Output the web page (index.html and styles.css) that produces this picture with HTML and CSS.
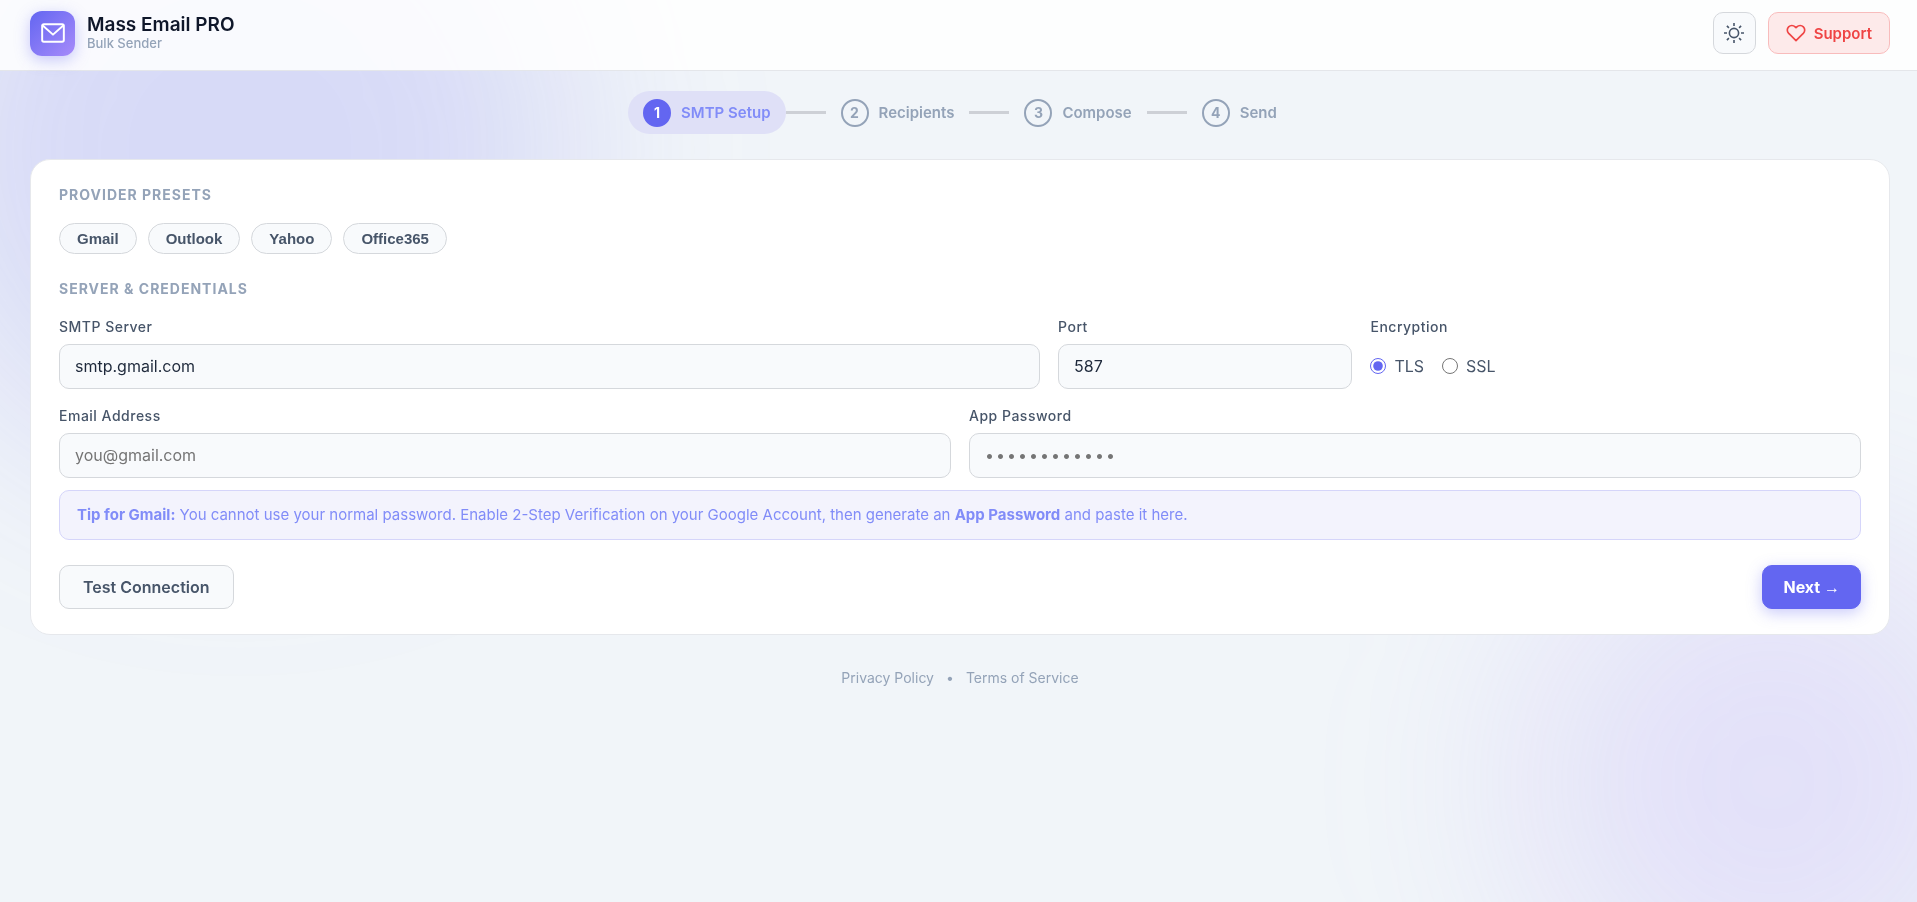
FILE: index.html
```html
<!DOCTYPE html>
<html lang="en">

<head>
    <meta charset="UTF-8">
    <meta name="viewport" content="width=device-width, initial-scale=1.0">
    <title>Mass Email PRO</title>
    <link rel="stylesheet" href="styles.css">
</head>

<body>
    <!-- Background glow -->
    <div class="blob blob-top"></div>
    <div class="blob blob-bottom"></div>

    <header class="topbar">
        <div class="brand">
            <div class="brand-logo">
                <svg width="26" height="26" viewBox="0 0 24 24" fill="none" stroke="currentColor" stroke-width="1.8"
                    stroke-linecap="round" stroke-linejoin="round">
                    <rect x="2" y="4" width="20" height="16" rx="1.5"></rect>
                    <path d="M2.5 5 L12 13.5 L21.5 5"></path>
                </svg>
            </div>
            <div class="brand-text">
                <h1>Mass Email PRO</h1>
                <p>Bulk Sender</p>
            </div>
        </div>
        <div class="topbar-actions">
            <button type="button" class="icon-btn" aria-label="Toggle theme">
                <svg width="20" height="20" viewBox="0 0 20 20" fill="none" stroke="currentColor" stroke-width="1.6">
                    <circle cx="10" cy="10" r="4.6"></circle>
                    <path d="M10 0v3M10 17v3M0 10h3M17 10h3M2.9 2.9l2 2M15.1 15.1l2 2M2.9 17.1l2-2M15.1 4.9l2-2"></path>
                </svg>
            </button>
            <a href="#" class="support-btn">
                <svg width="20" height="20" viewBox="0 0 24 24" fill="none" stroke="currentColor" stroke-width="2"
                    stroke-linecap="round" stroke-linejoin="round">
                    <path d="M20.84 4.61a5.5 5.5 0 0 0-7.78 0L12 5.67l-1.06-1.06a5.5 5.5 0 0 0-7.78 7.78l1.06 1.06L12 21.23l7.78-7.78 1.06-1.06a5.5 5.5 0 0 0 0-7.78z"></path>
                </svg>
                Support
            </a>
        </div>
    </header>

    <main class="page">
        <!-- Steps -->
        <div class="stepper">
            <div class="step active"><span class="step-num">1</span>SMTP Setup</div>
            <div class="step-line"></div>
            <div class="step"><span class="step-num">2</span>Recipients</div>
            <div class="step-line"></div>
            <div class="step"><span class="step-num">3</span>Compose</div>
            <div class="step-line"></div>
            <div class="step"><span class="step-num">4</span>Send</div>
        </div>

        <form class="card">
            <h2 class="section-title">Provider Presets</h2>
            <div class="presets">
                <button type="button" class="chip">Gmail</button>
                <button type="button" class="chip">Outlook</button>
                <button type="button" class="chip">Yahoo</button>
                <button type="button" class="chip">Office365</button>
            </div>

            <h2 class="section-title">Server &amp; Credentials</h2>
            <div class="grid grid-server">
                <div class="field">
                    <label for="server">SMTP Server</label>
                    <input type="text" id="server" value="smtp.gmail.com">
                </div>
                <div class="field">
                    <label for="port">Port</label>
                    <input type="text" id="port" value="587">
                </div>
                <div class="field" role="radiogroup" aria-labelledby="enc-label">
                    <span class="field-label" id="enc-label">Encryption</span>
                    <div class="radios">
                        <label><input type="radio" name="encryption" value="tls" checked>TLS</label>
                        <label><input type="radio" name="encryption" value="ssl">SSL</label>
                    </div>
                </div>
            </div>
            <div class="grid grid-login">
                <div class="field">
                    <label for="email">Email Address</label>
                    <input type="email" id="email" placeholder="you@gmail.com">
                </div>
                <div class="field">
                    <label for="password">App Password</label>
                    <input type="password" id="password" placeholder="••••••••••••">
                </div>
            </div>

            <div class="tip"><strong>Tip for Gmail:</strong> You cannot use your normal password. Enable 2-Step
                Verification on your Google Account, then generate an <strong>App Password</strong> and paste it here.
            </div>

            <div class="actions">
                <button type="button" class="btn btn-secondary">Test Connection</button>
                <button type="button" class="btn btn-primary">Next <span class="arrow">→</span></button>
            </div>
        </form>

        <footer class="footer">
            <a href="#">Privacy Policy</a>
            <span>•</span>
            <a href="#">Terms of Service</a>
        </footer>
    </main>
</body>

</html>
```

FILE: styles.css
```css
* {
    box-sizing: border-box;
}

body {
    margin: 0;
    min-height: 100vh;
    font-family: Inter, "Liberation Sans", sans-serif;
    font-size: 16px;
    color: #0f172a;
    background-color: #f1f5f9;
    overflow-x: hidden;
}

h1,
h2,
p {
    margin: 0;
}

button,
input {
    font-family: inherit;
}

a {
    text-decoration: none;
}

.blob {
    position: fixed;
    z-index: -1;
    border-radius: 50%;
    filter: blur(100px);
}

.blob-top {
    top: -180px;
    left: -90px;
    width: 660px;
    height: 660px;
    background-color: rgba(99, 102, 241, 0.18);
}

.blob-bottom {
    right: -105px;
    bottom: -130px;
    width: 500px;
    height: 500px;
    background-color: rgba(167, 139, 250, 0.18);
}

/* Header */
.topbar {
    display: flex;
    justify-content: space-between;
    align-items: center;
    height: 71px;
    padding: 0 27px 4px 30px;
    background-color: rgba(255, 255, 255, 0.85);
    border-bottom: 1px solid #e4e6ea;
}

.brand {
    display: flex;
    align-items: center;
    gap: 12px;
}

.brand-logo {
    display: flex;
    align-items: center;
    justify-content: center;
    width: 45px;
    height: 45px;
    border-radius: 12px;
    color: #fff;
    background: linear-gradient(135deg, #6366f1, #a78bfa);
    box-shadow: 0 4px 15px rgba(99, 102, 241, 0.35);
}

.brand-text h1 {
    font-size: 19px;
    font-weight: 600;
    line-height: 20px;
}

.brand-text p {
    font-size: 13px;
    font-weight: 500;
    line-height: 16px;
    color: #94a3b8;
}

.topbar-actions {
    display: flex;
    gap: 12px;
}

.icon-btn,
.support-btn {
    display: flex;
    align-items: center;
    justify-content: center;
    height: 42px;
    border-radius: 10px;
}

.icon-btn {
    width: 43px;
    padding: 0;
    color: #475569;
    background-color: #f8fafc;
    border: 1px solid #d5d8dc;
}

.support-btn {
    gap: 8px;
    padding: 0 17px;
    font-size: 15px;
    font-weight: 600;
    color: #ef4444;
    background-color: #fdeaea;
    border: 1px solid #f8bcbc;
}

.page {
    padding: 20px 27px 0 30px;
}

/* Stepper */
.stepper {
    display: flex;
    justify-content: center;
    align-items: center;
    margin-bottom: 25px;
}

.step {
    display: flex;
    align-items: center;
    gap: 10px;
    height: 43px;
    padding: 0 15px;
    border-radius: 22px;
    font-size: 15px;
    font-weight: 600;
    color: #94a3b8;
}

.step-num {
    display: flex;
    align-items: center;
    justify-content: center;
    width: 28px;
    height: 28px;
    border: 2px solid #94a3b8;
    border-radius: 50%;
    font-size: 14px;
    font-weight: 700;
}

.step.active {
    color: #818cf8;
    background-color: #dfe0f7;
}

.step.active .step-num {
    color: #fff;
    background-color: #6366f1;
    border-color: #6366f1;
}

.step-line {
    width: 40px;
    height: 3px;
    background-color: #cdd0d6;
}

/* Card */
.card {
    padding: 25px 28px;
    background-color: #fff;
    border: 1px solid #e6e8ec;
    border-radius: 20px;
}

.section-title {
    margin-bottom: 18px;
    font-size: 14px;
    font-weight: 700;
    line-height: 20px;
    letter-spacing: 1px;
    text-transform: uppercase;
    color: #94a3b8;
}

.presets {
    display: flex;
    gap: 11px;
    margin-bottom: 25px;
}

.chip {
    height: 31px;
    padding: 0 17px;
    font-family: "Liberation Sans", Arial, sans-serif;
    font-size: 15px;
    font-weight: 600;
    color: #475569;
    background-color: #f8fafc;
    border: 1px solid #d5d8dc;
    border-radius: 16px;
}

.grid {
    display: grid;
    gap: 18px;
}

.grid-server {
    grid-template-columns: 10fr 3fr 5fr;
    margin-bottom: 17px;
}

.grid-login {
    grid-template-columns: 1fr 1fr;
    margin-bottom: 12px;
}

.field {
    display: flex;
    flex-direction: column;
    gap: 8px;
}

.field > label,
.field-label {
    font-size: 14px;
    font-weight: 500;
    line-height: 19px;
    letter-spacing: 0.5px;
    color: #475569;
}

.field > input {
    width: 100%;
    height: 45px;
    padding: 0 15px 2px;
    font-size: 16px;
    color: #1e293b;
    background-color: #f8fafc;
    border: 1px solid #d5d8dc;
    border-radius: 10px;
}

.field > input[type="password"] {
    letter-spacing: 2px;
}

.radios {
    display: flex;
    align-items: center;
    gap: 18px;
    height: 45px;
    padding-bottom: 2px;
}

.radios label {
    display: flex;
    align-items: center;
    gap: 8px;
    font-size: 16px;
    color: #475569;
}

.radios input {
    width: 16px;
    height: 16px;
    margin: 0;
    accent-color: #6366f1;
}

.tip {
    margin-bottom: 25px;
    padding: 12px 17px;
    font-size: 15px;
    line-height: 24px;
    color: #818cf8;
    background-color: #f3f3fd;
    border: 1px solid #d5d5fa;
    border-radius: 10px;
}

.actions {
    display: flex;
    justify-content: space-between;
}

.btn {
    height: 44px;
    padding: 0 23px;
    font-size: 16px;
    font-weight: 600;
    border-radius: 10px;
}

.btn-secondary {
    color: #475569;
    background-color: #f8fafc;
    border: 1px solid #d5d8dc;
}

.btn-primary {
    padding: 0 20px;
    font-weight: 700;
    color: #fff;
    background-color: #6366f1;
    border: 1px solid #6366f1;
    box-shadow: 0 4px 15px rgba(99, 102, 241, 0.35);
}

.arrow {
    font-family: "Liberation Sans", Arial, sans-serif;
}

/* Footer */
.footer {
    display: flex;
    justify-content: center;
    gap: 12px;
    padding: 33px 0;
    font-size: 14px;
    line-height: 20px;
    color: #94a3b8;
}

.footer a {
    color: inherit;
}
```
